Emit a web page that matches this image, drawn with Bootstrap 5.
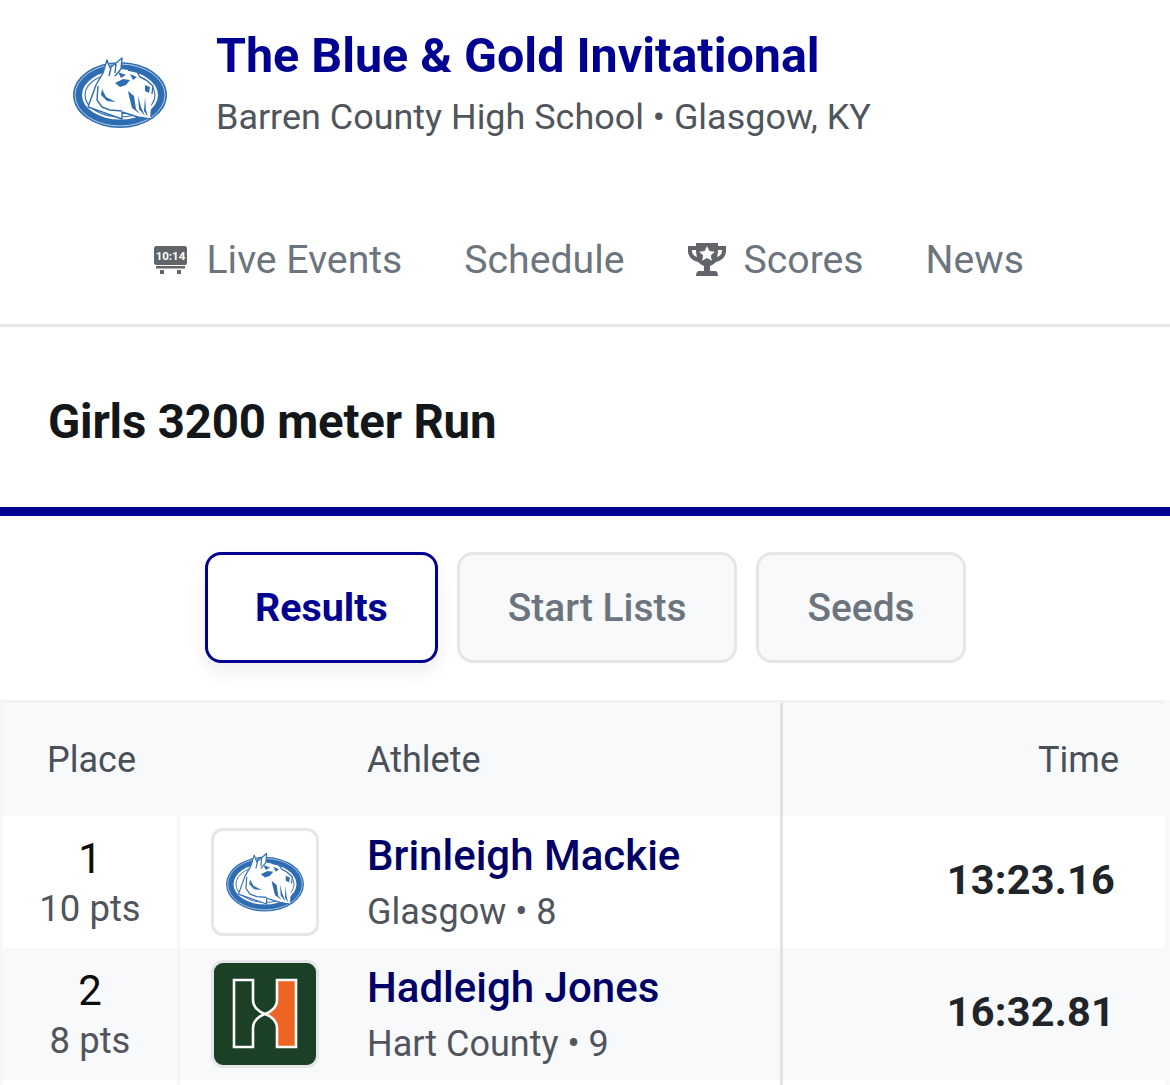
<!DOCTYPE html>
<html lang="en"><head><meta charset="utf-8">
<title>The Blue &amp; Gold Invitational</title>
<link href="https://cdn.jsdelivr.net/npm/bootstrap@5.3.0/dist/css/bootstrap.min.css" rel="stylesheet">
<style>
html,body{height:1085px;overflow:hidden;background:#fff}
body{font-family:Roboto,"Liberation Sans",sans-serif;color:#212529}
.meet-head{padding:26px 0 0 72px;height:192px;gap:48px}
.meet-logo{width:96px;height:76px;margin-top:29px}
.meet-title{font-size:48.4px;font-weight:700;color:#000091;line-height:60px;margin:0}
.meet-sub{font-size:35.95px;color:#50555c;line-height:42px;margin-top:9.5px}
.top-nav{height:135px;border-bottom:3px solid #e5e6e8;padding:45px 0 0 154px;gap:62px;align-items:flex-start}
.top-nav .nav-link{padding:0;font-size:39.2px;line-height:46px;color:#6c757d;font-weight:400;gap:19.5px}
.top-nav .nav-link.tight{gap:17px}
.event-box{height:180px;padding:12px 48px 0}
.event-name{font-size:47.4px;font-weight:700;color:#14171a;margin:0;letter-spacing:-.2px;line-height:1}
.blue-rule{height:9px;background:#000091}
.tab-row{padding:36px 0 0 205px;gap:19px;height:184px}
.tab-btn{height:111px;border:3px solid #e5e6e8;border-radius:16px;background:#f8f9fb;color:#6c757d;font-size:38.9px;font-weight:500;padding:2px 48px 0;line-height:1}
.tab-btn.is-on{background:#fff;border-color:#000091;color:#000091;font-weight:700;font-size:39.4px;padding:1px 47px 0;box-shadow:0 9px 18px rgba(0,0,0,.07)}
.res-wrap{background:#f8f9fb;height:385px;overflow:hidden}
.res-table{table-layout:fixed;width:1165px;margin:0;border-collapse:separate;border-spacing:0;border-left:3px solid #f6f7f9;border-top:3px solid #f1f2f4}
.res-table th,.res-table td{padding:0;border:0;vertical-align:middle;background:transparent;box-shadow:none}
.res-table thead th{height:113px;background:#f8f9fb;font-size:36px;font-weight:400;color:#495057}
.res-table tbody td{height:132px}
.res-table tbody tr.tail td{height:6px}
.res-table tr.alt td{background:#f8f9fb}
.col-place{width:177px}.col-logo{width:187px}.col-name{width:416px}
.place-head{padding-left:44px!important}
.place-cell{text-align:center;border-right:3px solid #f4f5f7!important}
.place-num{font-size:42px;color:#0b0b0b;line-height:48px;margin-top:.5px}
.place-pts{font-size:36.5px;color:#50555c;line-height:42px;margin-top:5.5px}
.logo-box{width:108px;height:108px;border:3px solid #e5e6e8;border-radius:12px;background:#fff;margin-left:31px}
.logo-box.hart{background:#1b4025}
.name-cell{border-right:3px solid #e3e4e6!important}
.ath-name{font-size:42px;font-weight:500;color:#000066;line-height:50px;margin-top:-1px}
.ath-sub{font-size:36px;color:#50555c;line-height:42px;margin-top:10px}
.time-cell{text-align:right;font-size:41.5px;font-weight:700;color:#212529;padding:0 50px 4px 0!important;letter-spacing:.2px}
.time-head{text-align:right;padding-right:46px!important}
.res-table thead th.name-cell{border-right-color:#dfe0e2!important}
</style></head>
<body>
<svg width="0" height="0" class="d-block"><defs>
<symbol id="scottie" viewBox="0 0 96 76">
<ellipse cx="48" cy="40" rx="47" ry="33" fill="#2f6db3"/>
<ellipse cx="48" cy="40" rx="45" ry="31" fill="none" stroke="#dbe7f4" stroke-width=".8"/>
<ellipse cx="48" cy="40" rx="38" ry="24.5" fill="#fff"/>
<ellipse cx="48" cy="40" rx="35" ry="22" fill="none" stroke="#2f6db3" stroke-width="1.1"/>
<path d="M16 52L24 30 31 17 35 5 39 12 50 3 49 14 56 15 65 17 68 22 74 25 81 31 80 40 79 52 78 64 66 62 50 57 50 64z" fill="#fff"/>
<path d="M16 52L24 30 31 18 35 5l3 8 12-10-1 11M39 13l-2 8M44 9l-1 9M49 14l-6 7M56 15l9 2 3 5 6 3 7 6-1 8M16 52l34 12 0-7M50 57l16 5 12 2M26 31l-1 14 5 7 8 3 12 1" fill="none" stroke="#2f6db3" stroke-width="1.4" stroke-linejoin="round"/>
<path d="M43 28l8-4 7 1-4 5-6 2zM73 30l5 2-1 6-4-2zM56 36l6 5 2 13 4 5-8-6-3-12zM66 40l3 12 4 9-6-7zM73 42l1 13 2 7-4-6zM30 34l4 8 10 5-9-1-6-6zM46 17l8 3-5 3zM58 19l7 3-4 3z" fill="#2f6db3"/>
</symbol>
</defs></svg>

<header class="d-flex meet-head">
<svg class="meet-logo flex-shrink-0"><use href="#scottie"/></svg>
<div><h1 class="meet-title">The Blue &amp; Gold Invitational</h1>
<div class="meet-sub">Barren County High School • Glasgow, KY</div></div>
</header>

<nav class="nav top-nav">
<a class="nav-link d-flex align-items-center" href="#">
<svg width="33" height="30" viewBox="0 0 33 30"><rect x="0" y="1" width="33" height="19" rx="2.5" fill="#616469"/><rect x="2" y="21" width="29" height="2.5" fill="#616469"/><rect x="6" y="25" width="4" height="4" fill="#616469"/><rect x="23" y="25" width="4" height="4" fill="#616469"/><text x="16.5" y="15" text-anchor="middle" font-family="Roboto" font-weight="700" font-size="11.5" fill="#fff">10:14</text></svg>
Live Events</a>
<a class="nav-link" href="#">Schedule</a>
<a class="nav-link tight d-flex align-items-center" href="#">
<svg width="40" height="36" viewBox="0 0 40 36"><path d="M9 1h22v3h8v5c0 6-5 10-10 11-2 2-4 3-6 4v5h5c2 0 3 2 3 5H9c0-3 1-5 3-5h5v-5c-2-1-4-2-6-4C6 19 1 15 1 9V4h8zM5 8v1c0 3 2 5 5 6-.6-2-1-5-1-7zm30 0h-4c0 2-.4 5-1 7 3-1 5-3 5-6z" fill="#616469"/><path d="M20 4l2.4 5 5.4.7-4 3.7 1.1 5.4-4.9-2.7-4.9 2.7 1.1-5.4-4-3.7 5.4-.7z" fill="#fff"/></svg>
Scores</a>
<a class="nav-link" href="#">News</a>
</nav>

<section class="event-box d-flex align-items-center"><h2 class="event-name">Girls 3200 meter Run</h2></section>
<div class="blue-rule"></div>

<div class="d-flex tab-row">
<button class="btn tab-btn is-on" type="button">Results</button>
<button class="btn tab-btn" type="button">Start Lists</button>
<button class="btn tab-btn" type="button">Seeds</button>
</div>

<div class="res-wrap">
<table class="table res-table">
<colgroup><col class="col-place"><col class="col-logo"><col class="col-name"><col></colgroup>
<thead><tr>
<th class="text-start place-head" colspan="2">Place</th>
<th class="name-cell">Athlete</th>
<th class="time-head">Time</th>
</tr></thead>
<tbody>
<tr>
<td class="place-cell bg-white"><div class="place-num">1</div><div class="place-pts">10 pts</div></td>
<td class="bg-white"><div class="logo-box d-flex align-items-center justify-content-center"><svg width="80" height="63"><use href="#scottie"/></svg></div></td>
<td class="name-cell bg-white"><div class="ath-name">Brinleigh Mackie</div><div class="ath-sub">Glasgow • 8</div></td>
<td class="time-cell bg-white">13:23.16</td>
</tr>
<tr class="alt">
<td class="place-cell"><div class="place-num">2</div><div class="place-pts">8 pts</div></td>
<td><div class="logo-box hart d-flex align-items-center justify-content-center">
<svg width="66" height="72" viewBox="0 0 66 72"><path d="M45 2h19v67H45V50c0-7-6-12-12-14 6-2 12-7 12-14z" fill="#ee6423"/><path d="M2 2h19v20c0 7 6 12 12 14 6 2 12 7 12 14v19h19V2H45v20c0 7-6 12-12 14-6 2-12 7-12 14v19H2z" fill="none" stroke="#fff" stroke-width="2.6"/></svg>
</div></td>
<td class="name-cell"><div class="ath-name">Hadleigh Jones</div><div class="ath-sub">Hart County • 9</div></td>
<td class="time-cell">16:32.81</td>
</tr>
<tr class="tail"><td class="bg-white place-cell"></td><td class="bg-white"></td><td class="bg-white name-cell"></td><td class="bg-white"></td></tr>
</tbody>
</table>
</div>
</body></html>
